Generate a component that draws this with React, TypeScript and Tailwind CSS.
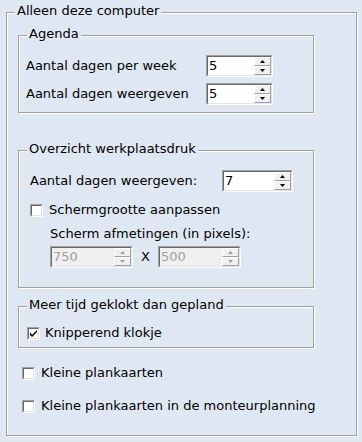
import type { ReactNode } from "react";

const BG = "bg-[#dfe8f2]";

function GroupBox({ title, className, children }: { title?: string; className?: string; children: ReactNode }) {
    return (
        <div className={`relative border border-[#a0a0a0] shadow-[inset_1px_1px_0_#ffffff,1px_1px_0_#ffffff] ${className ?? ""}`}>
            {title && (
                <span className={`absolute top-[-10px] left-[8px] px-[2px] leading-[16px] whitespace-nowrap ${BG}`}>
                    {title}
                </span>
            )}
            {children}
        </div>
    );
}

function Arrow({ up, disabled }: { up?: boolean; disabled?: boolean }) {
    return (
        <svg width="5" height="3" viewBox="0 0 5 3" className="block">
            <polygon points={up ? "0,3 5,3 2.5,0" : "0,0 5,0 2.5,3"} fill={disabled ? "#a0a0a0" : "#000000"} />
        </svg>
    );
}

function SpinButton({ up, disabled }: { up?: boolean; disabled?: boolean }) {
    return (
        <div className="flex flex-1 items-center justify-center bg-[#f0f0f0] border border-t-white border-l-white border-b-[#a0a0a0] border-r-[#a0a0a0]">
            <Arrow up={up} disabled={disabled} />
        </div>
    );
}

function Spin({ value, width, disabled }: { value: string; width: string; disabled?: boolean }) {
    return (
        <div className={`h-[22px] ${width} border border-t-[#a0a0a0] border-l-[#a0a0a0] border-b-white border-r-white`}>
            <div
                className={`flex h-full border border-t-[#696969] border-l-[#696969] border-b-[#e3e3e3] border-r-[#e3e3e3] ${
                    disabled ? "bg-[#f0f0f0] text-[#a0a0a0]" : "bg-white text-black"
                }`}
            >
                <span className="flex-1 pl-[1px] leading-[16px] self-center">{value}</span>
                <div className="flex w-[17px] flex-col">
                    <SpinButton up disabled={disabled} />
                    <SpinButton disabled={disabled} />
                </div>
            </div>
        </div>
    );
}

function CheckBox({ checked }: { checked?: boolean }) {
    return (
        <div className="h-[13px] w-[13px] shrink-0 border border-t-[#a0a0a0] border-l-[#a0a0a0] border-b-white border-r-white">
            <div className="flex h-full items-center justify-center border border-t-[#696969] border-l-[#696969] border-b-[#e3e3e3] border-r-[#e3e3e3] bg-white">
                {checked && (
                    <svg width="7" height="7" viewBox="0 0 7 7" className="block">
                        <path d="M0 2v3l2 2 5-5V0L2 5z" fill="#000000" />
                    </svg>
                )}
            </div>
        </div>
    );
}

function CheckRow({ label, checked, gap }: { label: string; checked?: boolean; gap: string }) {
    return (
        <div className={`flex h-[16px] items-center ${gap}`}>
            <CheckBox checked={checked} />
            <span className="leading-[16px] whitespace-nowrap">{label}</span>
        </div>
    );
}

export default function App() {
    return (
        <div className={`h-[442px] w-[362px] overflow-hidden pl-[6px] pt-[12px] text-[13px] text-black font-['DejaVu_Sans',sans-serif] ${BG}`}>
            <GroupBox title="Alleen deze computer" className="h-[424px] w-[351px]">
                <div className="flex flex-col pl-[11px] pt-[22px]">
                    <GroupBox title="Agenda" className="w-[296px] pl-[7px] pt-[19px] pb-[7px]">
                        <div className="flex flex-col gap-[6px]">
                            <div className="flex items-center">
                                <span className="w-[180px] leading-[16px]">Aantal dagen per week</span>
                                <Spin value="5" width="w-[67px]" />
                            </div>
                            <div className="flex items-center">
                                <span className="w-[180px] leading-[16px]">Aantal dagen weergeven</span>
                                <Spin value="5" width="w-[67px]" />
                            </div>
                        </div>
                    </GroupBox>

                    <GroupBox title="Overzicht werkplaatsdruk" className="mt-[37px] w-[296px] h-[138px] pl-[11px] pt-[19px]">
                        <div className="flex items-center">
                            <span className="w-[192px] leading-[16px]">Aantal dagen weergeven:</span>
                            <Spin value="7" width="w-[71px]" />
                        </div>
                        <div className="mt-[10px]">
                            <CheckRow label="Schermgrootte aanpassen" gap="gap-[6px]" />
                        </div>
                        <div className="pl-[20px]">
                            <div className="mt-[8px] leading-[16px]">Scherm afmetingen (in pixels):</div>
                            <div className="mt-[4px] flex items-center gap-[8px]">
                                <Spin value="750" width="w-[83px]" disabled />
                                <span className="leading-[16px]">X</span>
                                <Spin value="500" width="w-[83px]" disabled />
                            </div>
                        </div>
                    </GroupBox>

                    <GroupBox title="Meer tijd geklokt dan gepland" className="mt-[18px] w-[296px] h-[42px] pl-[8px] pt-[18px]">
                        <CheckRow label="Knipperend klokje" checked gap="gap-[5px]" />
                    </GroupBox>

                    <div className="ml-[4px] mt-[17px] flex flex-col gap-[17px]">
                        <CheckRow label="Kleine plankaarten" gap="gap-[6px]" />
                        <CheckRow label="Kleine plankaarten in de monteurplanning" gap="gap-[6px]" />
                    </div>
                </div>
            </GroupBox>
        </div>
    );
}
